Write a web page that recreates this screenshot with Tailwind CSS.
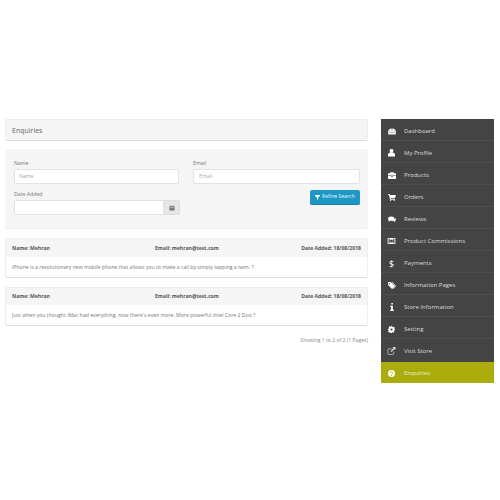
<!DOCTYPE html>
<html lang="en">
<head>
    <meta charset="UTF-8">
    <title>Enquiries</title>
    <script src="https://cdn.jsdelivr.net/npm/@tailwindcss/browser@4"></script>
</head>
<body class="bg-white font-['Open_Sans',sans-serif] w-[500px] h-[500px] overflow-hidden">
    <div class="flex gap-[13px] pl-[5px] pt-[119px]">
        <!-- Main content -->
        <div class="w-[363px] text-[#666]">
            <div class="h-[22px] pt-[2px] flex items-center px-[6px] bg-[#f5f5f5] border border-[#eee] border-b-[#ddd] rounded-[2px] text-[7px] text-[#666]">Enquiries</div>

            <!-- Filter -->
            <div class="mt-[8px] h-[80px] bg-[#f5f5f5] rounded-[2px] border-b border-[#eee] pl-[9px] pr-[8px] pt-[10px] flex gap-[14px]">
                <div class="w-[165px]">
                    <div class="text-[5.200px] leading-[8px] text-[#777]">Name</div>
                    <div class="mt-[2px] h-[15px] bg-white border border-[#e2e2e2] rounded-[2px] flex items-center pl-[4px] text-[5.200px] text-[#aaa]">Name</div>
                    <div class="mt-[6px] text-[5.200px] leading-[8px] text-[#777]">Date Added</div>
                    <div class="mt-[2px] flex h-[15px] w-[166px]">
                        <div class="w-[150px] bg-white border border-[#e2e2e2] rounded-l-[2px]"></div>
                        <div class="flex-1 bg-[#e6e6e6] border border-[#ddd] border-l-0 rounded-r-[2px] flex items-center justify-center">
                            <svg width="6" height="6" viewBox="0 0 14 14"><path fill="#777" d="M1 3h12v10H1zM3 1h2v2H3zM9 1h2v2H9z"/><path fill="#e6e6e6" d="M2.500 6h9v1h-9z"/></svg>
                        </div>
                    </div>
                </div>
                <div class="w-[167px]">
                    <div class="text-[5.200px] leading-[8px] text-[#777]">Email</div>
                    <div class="mt-[2px] h-[15px] bg-white border border-[#e2e2e2] rounded-[2px] flex items-center pl-[5px] text-[5.200px] text-[#aaa]">Email</div>
                    <div class="mt-[6px] flex justify-end">
                        <div class="w-[50px] h-[15px] bg-[#1f97c4] border-b border-[#1a7fa5] rounded-[2px] flex items-center justify-center gap-[2px] text-[5.200px] text-[#e8f6fb]">
                            <svg width="5" height="5" viewBox="0 0 10 10"><path fill="#fff" d="M0 0h10v1.500L6 5.500V10L4 8.500v-3L0 1.500z"/></svg>
                            Refine Search
                        </div>
                    </div>
                </div>
            </div>

            <!-- Enquiry cards -->
            <div class="mt-[9px] border border-[#eee] border-b-[#ddd] rounded-[2px] h-[40px]">
                <div class="h-[18px] pt-[2px] bg-[#f5f5f5] flex items-center px-[6px] text-[5.100px] font-bold text-[#555] whitespace-nowrap">
                    <span class="w-[143px]">Name: Mehran</span>
                    <span class="flex-1">Email: mehran@test.com</span>
                    <span>Date Added: 18/08/2018</span>
                </div>
                <div class="h-[21px] flex items-center px-[6px] text-[5.150px] text-[#777]">iPhone is a revolutionary new mobile phone that allows you to make a call by simply tapping a nam. ?</div>
            </div>
            <div class="mt-[9px] border border-[#eee] border-b-[#ddd] rounded-[2px] h-[39px]">
                <div class="h-[17px] pt-[1px] bg-[#f5f5f5] flex items-center px-[6px] text-[5.100px] font-bold text-[#555] whitespace-nowrap">
                    <span class="w-[143px]">Name: Mehran</span>
                    <span class="flex-1">Email: mehran@test.com</span>
                    <span>Date Added: 18/08/2018</span>
                </div>
                <div class="h-[21px] flex items-center px-[6px] text-[5.150px] text-[#777]">Just when you thought iMac had everything, now there`s even more. More powerful Intel Core 2 Duo ?</div>
            </div>
            <div class="mt-[10px] text-right text-[5.100px] leading-[9px] text-[#888]">Showing 1 to 2 of 2 (1 Pages)</div>
        </div>

        <!-- Sidebar -->
        <nav class="w-[113px] bg-[#444] text-[6px] text-[#ddd]">
            <a class="h-[22px] pt-[3px] flex items-center border-b border-[#4f4f4f]">
                <span class="w-[21px] mr-[2px] flex justify-center"><svg width="8" height="7" viewBox="0 0 18 16"><path fill="#fff" fill-rule="evenodd" d="M9 1a9 9 0 0 1 9 9c0 2-.6 3.500-1.500 5h-15C.6 13.500 0 12 0 10a9 9 0 0 1 9-9zM8 3v3h2V3zM3 8v2h2V8zM13 8v2h2V8zM8 9v3h2V9z"/></svg></span>
                <span>Dashboard</span>
            </a>
            <a class="h-[22px] pt-[3px] flex items-center border-b border-[#4f4f4f]">
                <span class="w-[21px] mr-[2px] flex justify-center"><svg width="7" height="8" viewBox="0 0 16 18"><path fill="#fff" d="M8 0a4 4 0 0 1 4 5c-.4 1.500-1 2.500-2 3 3 .5 6 1.500 6 5v4H0v-4c0-3.500 3-4.500 6-5-1-.5-1.600-1.500-2-3a4 4 0 0 1 4-5z"/></svg></span>
                <span>My Profile</span>
            </a>
            <a class="h-[22px] pt-[3px] flex items-center border-b border-[#4f4f4f]">
                <span class="w-[21px] mr-[2px] flex justify-center"><svg width="8" height="7" viewBox="0 0 18 16"><path fill="#fff" fill-rule="evenodd" d="M6 0h6l1 1v2h5v5H0V3h5V1zM7 1.500V3h4V1.500zM0 9h7v2h4V9h7v7H0z"/></svg></span>
                <span>Products</span>
            </a>
            <a class="h-[22px] pt-[3px] flex items-center border-b border-[#4f4f4f]">
                <span class="w-[21px] mr-[2px] flex justify-center"><svg width="8" height="7" viewBox="0 0 18 16"><path fill="#fff" d="M0 0h3.500l.5 2h14l-2 7H6l.4 2H16v2H4.800L2 2H0z"/><circle cx="6" cy="14.500" r="1.500" fill="#fff"/><circle cx="14" cy="14.500" r="1.500" fill="#fff"/></svg></span>
                <span>Orders</span>
            </a>
            <a class="h-[22px] pt-[3px] flex items-center border-b border-[#4f4f4f]">
                <span class="w-[21px] mr-[2px] flex justify-center"><svg width="8" height="7" viewBox="0 0 18 16"><ellipse cx="7" cy="6" rx="7" ry="5" fill="#fff"/><path fill="#fff" d="M2 9l-1 4 5-3z"/><path fill="#fff" d="M15 4c2 1 3 2.500 3 4 0 1.500-1 3-2.500 3.500L17 15l-4-3c-2 0-4-.5-5-1.500 4 0 7.500-2.500 7-6.500z"/></svg></span>
                <span>Reviews</span>
            </a>
            <a class="h-[22px] pt-[3px] flex items-center border-b border-[#4f4f4f]">
                <span class="w-[21px] mr-[2px] flex justify-center"><svg width="9" height="6" viewBox="0 0 18 14"><path fill="#fff" fill-rule="evenodd" d="M0 0h18v14H0zM2 2v10h3V2zM13 2v10h3V2zM9 3.500a3.500 3.500 0 1 0 0 7 3.500 3.500 0 0 0 0-7z"/></svg></span>
                <span>Product Commissions</span>
            </a>
            <a class="h-[22px] pt-[3px] flex items-center border-b border-[#4f4f4f]">
                <span class="w-[21px] mr-[2px] flex justify-center text-[9px] leading-none text-white">$</span>
                <span>Payments</span>
            </a>
            <a class="h-[22px] pt-[3px] flex items-center border-b border-[#4f4f4f]">
                <span class="w-[21px] mr-[2px] flex justify-center"><svg width="8" height="7" viewBox="0 0 18 16"><path fill="#fff" fill-rule="evenodd" d="M0 0h6l9 9-6 7-9-9zM3 2.500a1.300 1.300 0 1 0 0 2.600 1.300 1.300 0 0 0 0-2.600z"/><path fill="#fff" d="M8 0h2l8 9-6 7-1.500-1 5-6z"/></svg></span>
                <span>Information Pages</span>
            </a>
            <a class="h-[22px] pt-[3px] flex items-center border-b border-[#4f4f4f]">
                <span class="w-[21px] mr-[2px] flex justify-center"><svg width="4" height="8" viewBox="0 0 8 18"><path fill="#fff" d="M2.500 0h3.500v3.500H2.500zM0 6h6v9h2v3H0v-3h2V9H0z"/></svg></span>
                <span>Store Information</span>
            </a>
            <a class="h-[22px] pt-[3px] flex items-center border-b border-[#4f4f4f]">
                <span class="w-[21px] mr-[2px] flex justify-center"><svg width="7" height="7" viewBox="0 0 16 16"><path fill="#fff" fill-rule="evenodd" d="M6.500 0h3l.4 2.200 1.500.6L13.300 1.500l2.100 2.100-1.300 1.900.6 1.500L16 6.500v3l-2.200.4-.6 1.500 1.300 1.900-2.100 2.100-1.900-1.300-1.500.6-.5 2.300h-3l-.4-2.200-1.500-.6-1.900 1.300L.5 12.400l1.300-1.900-.6-1.500L0 9.500v-3l2.200-.4.6-1.500L1.500 2.700 3.600.6l1.900 1.300 1-.4zM8 5.500a2.500 2.500 0 1 0 0 5 2.500 2.500 0 0 0 0-5z"/></svg></span>
                <span>Setting</span>
            </a>
            <a class="h-[22px] pt-[2px] flex items-center">
                <span class="w-[21px] mr-[2px] flex justify-center"><svg width="9" height="8" viewBox="0 0 18 18"><path fill="none" stroke="#ddd" stroke-width="1.500" d="M14 10v5a2 2 0 0 1-2 2H3a2 2 0 0 1-2-2V6a2 2 0 0 1 2-2h6"/><path fill="#ddd" d="M11 0h7v7l-2.500-2.500L9 11 7 9l6.500-6.500z"/></svg></span>
                <span>Visit Store</span>
            </a>
            <a class="h-[21px] mt-[1px] pt-[1px] flex items-center bg-[#acac0c] text-[#f0f0cc]">
                <span class="w-[21px] mr-[2px] flex justify-center"><svg width="7" height="7" viewBox="0 0 16 16"><circle cx="8" cy="8" r="8" fill="#fff"/><path fill="none" stroke="#acac0c" stroke-width="2" d="M5.500 6a2.500 2.500 0 1 1 3.500 2.300c-.7.400-1 .8-1 1.700"/><rect x="7" y="11.500" width="2" height="2" fill="#acac0c"/></svg></span>
                <span>Enquiries</span>
            </a>
        </nav>
    </div>
</body>
</html>
